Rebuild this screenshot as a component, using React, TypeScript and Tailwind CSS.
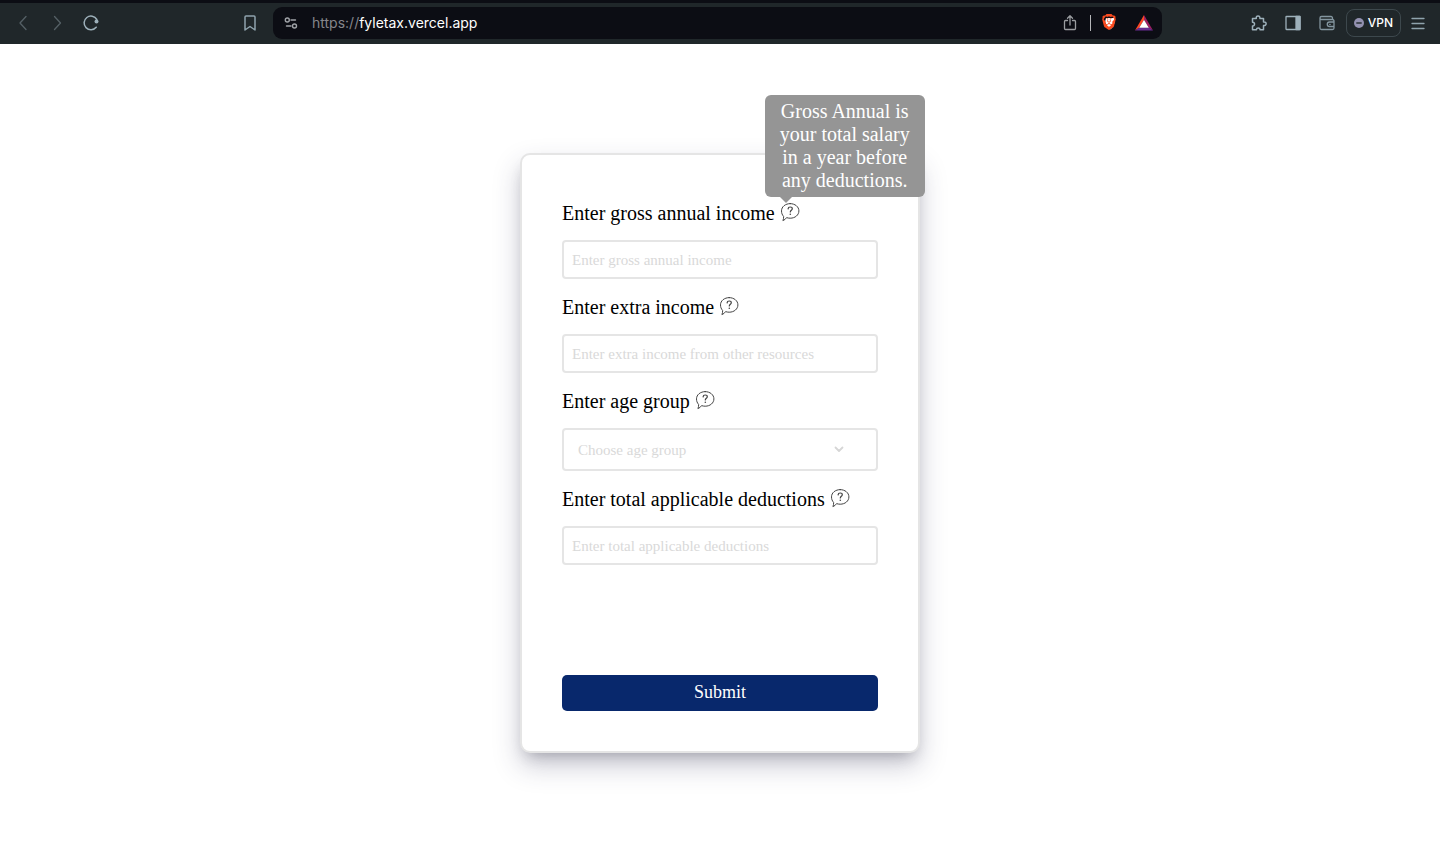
import React from "react";
import { SiBrave } from "react-icons/si";

function ChromeButton({ label, className, children }: { label: string; className?: string; children: React.ReactNode }) {
  return (
    <button type="button" aria-label={label} className={`flex size-5 shrink-0 items-center justify-center ${className ?? "text-[#9db0ba]"}`}>
      {children}
    </button>
  );
}

const stroke = {
  width: 20,
  height: 20,
  viewBox: "0 0 20 20",
  fill: "none",
  stroke: "currentColor",
  strokeWidth: 1.3,
  strokeLinecap: "round" as const,
  strokeLinejoin: "round" as const,
};

function BrowserBar() {
  return (
    <header className="flex h-11 items-center border-t-3 border-[#0c0d14] bg-[#20272a] pb-px font-['Inter',sans-serif]">
      <nav className="flex w-[273px] shrink-0 items-center gap-[14px] pr-[13px] pl-[13px]">
        <ChromeButton label="Back" className="text-[#556066]">
          <svg {...stroke}><path d="M13 3.500L7 10l6 6.500" /></svg>
        </ChromeButton>
        <ChromeButton label="Forward" className="text-[#556066]">
          <svg {...stroke}><path d="M7.500 3.500l6 6.500-6 6.500" /></svg>
        </ChromeButton>
        <ChromeButton label="Reload">
          <svg {...stroke} strokeWidth="1.5">
            <path d="M15.200 14.200A6.800 6.800 0 1 1 15.800 6.500" />
            <circle cx="15.500" cy="8.400" r="2" fill="currentColor" stroke="none" />
          </svg>
        </ChromeButton>
        <ChromeButton label="Bookmark" className="ml-auto text-[#8fa3ad]">
          <svg {...stroke} strokeWidth="1.5"><path d="M6 3h8a1 1 0 0 1 1 1v13l-5-3.500L5 17V4a1 1 0 0 1 1-1z" /></svg>
        </ChromeButton>
      </nav>

      <div className="flex h-8 min-w-0 flex-1 items-center rounded-[9px] bg-[#0c0d14] pr-2 pl-2">
        <ChromeButton label="Site settings" className="text-[#a0a3a8]">
          <svg {...stroke} strokeWidth="1.4">
            <circle cx="6.300" cy="7" r="2" />
            <path d="M10 7h4.500M5.500 13H10" />
            <circle cx="13.500" cy="13" r="2" />
          </svg>
        </ChromeButton>
        <p className="ml-[11px] min-w-0 flex-1 truncate text-sm text-white">
          <span className="text-[#85868b]">https://</span>fyletax.vercel.app
        </p>
        <ChromeButton label="Share" className="text-[#9b9da1]">
          <svg {...stroke}><path d="M7.500 7.500h-2a1 1 0 0 0-1 1V15.500a1 1 0 0 0 1 1h9a1 1 0 0 0 1-1V8.500a1 1 0 0 0-1-1h-2M10 12V3M7.500 5.200L10 2.700l2.500 2.500" /></svg>
        </ChromeButton>
        <span className="mr-[9px] ml-[10px] h-4 w-px bg-[#b5b6b9]" />
        <ChromeButton label="Brave Shields" className="text-[#fb4a1e]">
          <svg width="20" height="20" viewBox="0 0 20 20">
            <path d="M6 5h8l1 4-3 6-2 1.500L8 15 5 9z" fill="#fff" />
            <SiBrave x={1} y={1} width={18} height={18} />
          </svg>
        </ChromeButton>
        <ChromeButton label="Rewards" className="ml-[14px]">
          <svg width="20" height="20" viewBox="0 0 20 20">
            <path d="M10 2L1 17.500l4.200-2.800L10 6.800z" fill="#ff4724" />
            <path d="M10 2l9 15.500-4.200-2.800L10 6.800z" fill="#9e1f63" />
            <path d="M1 17.500h18l-4.200-3H5.200z" fill="#662d91" />
            <path d="M10 6.800l4.800 7.900H5.200z" fill="#fff" />
          </svg>
        </ChromeButton>
      </div>

      <div className="flex w-[278px] shrink-0 items-center justify-end gap-[14px] pr-3">
        <ChromeButton label="Extensions">
          <svg {...stroke} strokeWidth="1.5">
            <path d="M3.500 5.500H7.300C6.600 2 11.400 2 10.900 5.500H14.500V9C18 8.300 18 13 14.500 12.500V16.800H11C11.200 14.300 7.300 14.300 7.500 16.800H3.500V13C6.200 13.200 6.200 9 3.500 9.200Z" />
          </svg>
        </ChromeButton>
        <ChromeButton label="Side panel">
          <svg {...stroke}>
            <rect x="3" y="3.500" width="14" height="13" rx="0.500" />
            <path d="M13 3.500h4v13h-4z" fill="currentColor" />
          </svg>
        </ChromeButton>
        <ChromeButton label="Wallet" className="text-[#8496a0]">
          <svg {...stroke}>
            <path d="M3 5v10a1.500 1.500 0 0 0 1.500 1.500h11A1.500 1.500 0 0 0 17 15V8a1.500 1.500 0 0 0-1.500-1.500h-11A1.500 1.500 0 0 1 3 5zM3 5a1.500 1.500 0 0 1 1.500-1.500H14A1.500 1.500 0 0 1 15.500 5v1.500M17 9h-4.500a2.200 2.200 0 0 0 0 4.500H17M12.700 11.300h.5" />
          </svg>
        </ChromeButton>
        <button type="button" className="-mx-[5px] flex h-7 w-[55px] shrink-0 items-center justify-center gap-1 rounded-lg border border-[#3d484d] text-xs font-medium text-white">
          <svg width="10" height="10" viewBox="0 0 10 10">
            <circle cx="5" cy="5" r="5" fill="#9391b0" />
            <path d="M2.300 5h5.400" stroke="#20272a" strokeWidth="1.400" />
          </svg>
          VPN
        </button>
        <ChromeButton label="Menu" className="-ml-[2px] text-[#8fa3ad]">
          <svg {...stroke}><path d="M4 5.500h12M4 10.500h12M4 15.500h12" /></svg>
        </ChromeButton>
      </div>
    </header>
  );
}

function HelpIcon() {
  return (
    <svg width="20" height="20" viewBox="0 0 20 20" fill="none" stroke="#444" strokeLinecap="round" strokeLinejoin="round">
      <path d="M10.200 1.600c4.900 0 8.700 3.200 8.700 7.300s-3.800 7.300-8.700 7.300c-1.300 0-2.500-.2-3.600-.6-.9 1.400-2 2.400-3.700 3 .6-1.300.8-2.600.7-4.200C2.200 12.900 1.500 11 1.500 8.900c0-4.100 3.800-7.300 8.700-7.300z" strokeWidth="1" />
      <path d="M8.100 6.900c.1-1.200.9-1.900 2.100-1.900s2.100.7 2.100 1.700c0 1.500-2 1.600-2 3.300" strokeWidth="1.200" />
      <circle cx="10.300" cy="12.300" r="0.800" fill="#444" stroke="none" />
    </svg>
  );
}

function Field({ id, label, tip, children }: { id: string; label: string; tip?: string; children: React.ReactNode }) {
  return (
    <div className="flex flex-col gap-[10px]">
      <div className="flex h-[35px] items-center gap-[5px]">
        <label htmlFor={id} className="pt-[2px] text-xl leading-[23px]">{label}</label>
        <button type="button" aria-label={`About: ${label}`} className="relative size-5">
          <HelpIcon />
          {tip && (
            <span role="tooltip" className="absolute bottom-[25px] left-[-15px] z-10 w-40 rounded-[6px] bg-[#959595] px-[10px] py-[5px] text-center text-xl leading-[23px] text-white">
              {tip}
              <span className="absolute top-full left-[15px] border-x-6 border-t-6 border-x-transparent border-t-[#959595]" />
            </span>
          )}
        </button>
      </div>
      {children}
    </div>
  );
}

const inputClass =
  "h-[39px] w-full rounded-[4px] border-2 border-[#e5e5e5] px-2 pt-[2px] text-[15px] outline-none placeholder:text-[#d9d9d9]";

export default function App() {
  return (
    <div className="flex min-h-screen flex-col bg-white font-['Liberation_Serif',serif] text-black">
      <BrowserBar />
      <main className="flex flex-1 items-center justify-center px-4 py-8">
        <form
          onSubmit={(e) => e.preventDefault()}
          className="flex min-h-[600px] w-full max-w-[400px] flex-col gap-[10px] rounded-[10px] border-2 border-[#e5e5e5] bg-white p-10 shadow-[0_13px_27px_0_rgba(50,50,93,0.25),0_8px_16px_-8px_rgba(0,0,0,0.3)]"
        >
          <Field id="income" label="Enter gross annual income" tip="Gross Annual is your total salary in a year before any deductions.">
            <input id="income" placeholder="Enter gross annual income" className={inputClass} />
          </Field>
          <Field id="extra" label="Enter extra income">
            <input id="extra" placeholder="Enter extra income from other resources" className={inputClass} />
          </Field>
          <Field id="age" label="Enter age group">
            <div className="relative">
              <select id="age" defaultValue="" className="block h-[43px] w-full appearance-none rounded-[4px] border-2 border-[#e5e5e5] bg-white px-[14px] pt-[2px] text-[15px] text-[#d9d9d9] outline-none">
                <option value="" disabled>Choose age group</option>
              </select>
              <svg className="pointer-events-none absolute top-4 right-[34px]" width="10" height="10" viewBox="0 0 10 10" fill="none" stroke="#d6d6d6" strokeWidth="1.800" strokeLinecap="round" strokeLinejoin="round">
                <path d="M1.500 3.500L5 7l3.500-3.500" />
              </svg>
            </div>
          </Field>
          <Field id="deductions" label="Enter total applicable deductions">
            <input id="deductions" placeholder="Enter total applicable deductions" className={inputClass} />
          </Field>
          <button type="submit" className="mt-auto h-9 w-full rounded-[5px] bg-[#08286c] pb-[2px] text-lg text-white">
            Submit
          </button>
        </form>
      </main>
    </div>
  );
}
